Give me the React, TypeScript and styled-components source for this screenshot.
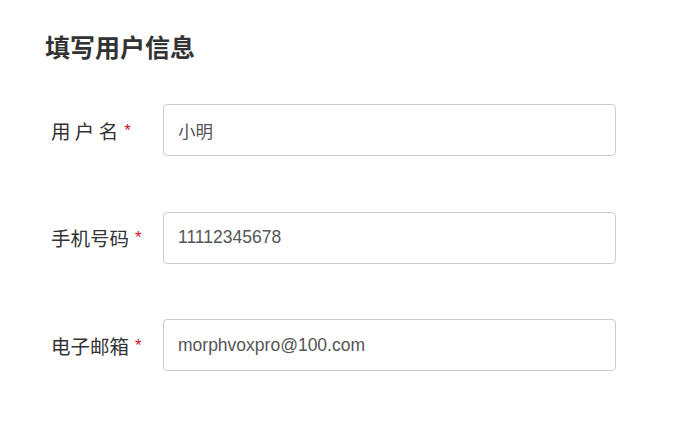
import React from 'react';
import styled, { createGlobalStyle } from 'styled-components';

interface Field {
  id: string;
  label: string;
  value: string;
}

const fields: Field[] = [
  { id: 'name', label: '用 户 名', value: '小明' },
  { id: 'phone', label: '手机号码', value: '11112345678' },
  { id: 'email', label: '电子邮箱', value: 'morphvoxpro@100.com' },
];

const App: React.FC = () => {
  return (
    <>
      <GlobalStyle />
      <Page>
        <Title>填写用户信息</Title>
        <Form>
          {fields.map(field => (
            <Row key={field.id}>
              <Label htmlFor={field.id}>
                {field.label}
                <Required>*</Required>
              </Label>
              <Input id={field.id} defaultValue={field.value} />
            </Row>
          ))}
        </Form>
      </Page>
    </>
  );
};

const GlobalStyle = createGlobalStyle`
  body {
    margin: 0;
    background: #fff;
    font-family: "Liberation Sans", "Noto Sans CJK SC", sans-serif;
  }
`;

const Page = styled.div`
  padding: 32px 0 0 45px;
  width: 571px;
`;

const Title = styled.h1`
  margin: 0;
  font-size: 25px;
  line-height: 29px;
  font-weight: bold;
  color: #333;
  font-family: "Noto Sans CJK SC", sans-serif;
`;

const Form = styled.div`
  display: flex;
  flex-direction: column;
  gap: 55.5px;
  margin-top: 43px;
`;

const Row = styled.div`
  display: flex;
  align-items: center;
`;

const Label = styled.label`
  width: 118px;
  padding-left: 6px;
  box-sizing: border-box;
  font-size: 19.5px;
  color: #333;
  font-family: "Noto Sans CJK SC", sans-serif;
  white-space: pre;
`;

const Required = styled.span`
  color: #d0112b;
  font-size: 17px;
  margin-left: 6px;
  font-family: "Liberation Sans", sans-serif;
  vertical-align: 3px;
`;

const Input = styled.input`
  flex: 1;
  height: 52px;
  box-sizing: border-box;
  border: 1px solid #ccc;
  border-radius: 4px;
  padding: 0 14px;
  font-size: 17.5px;
  color: #555;
  font-family: "Liberation Sans", "Noto Sans CJK SC", sans-serif;
  outline: none;
`;

export default App;
